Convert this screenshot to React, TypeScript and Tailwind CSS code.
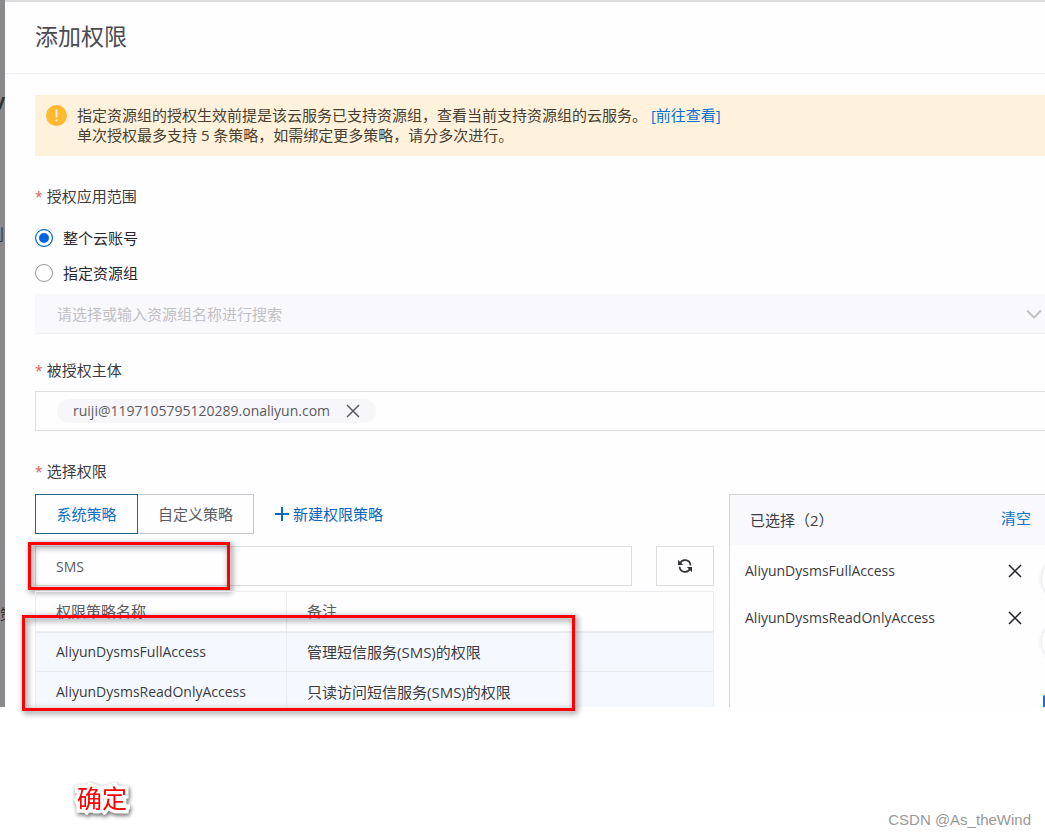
import { useState } from "react";

const policies = [
  { name: "AliyunDysmsFullAccess", note: "管理短信服务(SMS)的权限" },
  { name: "AliyunDysmsReadOnlyAccess", note: "只读访问短信服务(SMS)的权限" },
];

const CloseIcon = ({ className }: { className: string }) => (
  <svg viewBox="0 0 14 14" className={className} fill="none" stroke="currentColor" strokeWidth="1.5">
    <path d="M1 1l12 12M13 1L1 13" />
  </svg>
);

const Required = () => <span className="mr-1 text-sm leading-none text-[#dd6055]">*</span>;

const App = () => {
  const [scope, setScope] = useState("account");
  const [keyword, setKeyword] = useState("SMS");

  return (
    <div className="min-h-screen bg-white font-['Open_Sans','Noto_Sans_CJK_SC',sans-serif] text-[15px] leading-5 text-[#3c3c40]">
      <div className="flex">
        {/* page dimmed behind the drawer */}
        <aside className="relative w-[5px] shrink-0 overflow-hidden bg-[#8b898e] text-[#333]">
          <span className="absolute top-[86px] -left-[5px] text-lg font-bold">y</span>
          <span className="absolute top-[224px] -left-[11px]">则</span>
          <span className="absolute top-[604px] left-0">策</span>
        </aside>

        <main className="relative min-w-0 flex-1 bg-[#fefdff]">
          <header className="flex h-[74px] items-center border-t-2 border-b border-t-[#dddce0] border-b-[#f0eff3] px-[30px] pb-1">
            <h1 className="text-[23px] text-[#4c4c50]">添加权限</h1>
          </header>

          <form className="pt-[21px] pl-[30px]" onSubmit={(e) => e.preventDefault()}>
            <div className="flex gap-2.5 bg-[#fff2dd] px-[11px] pt-2.5 pb-[11px] text-[#4a3e30]">
              <svg viewBox="0 0 21 21" className="size-[21px] shrink-0">
                <circle cx="10.5" cy="10.5" r="10.5" fill="#ffba32" />
                <path d="M10.5 4.5v8M10.5 14.5v2" stroke="#fff2dd" strokeWidth="1.8" />
              </svg>
              <div>
                <p>
                  指定资源组的授权生效前提是该云服务已支持资源组，查看当前支持资源组的云服务。
                  <a href="#" className="text-[#0a72cc]"> [前往查看]</a>
                </p>
                <p>单次授权最多支持 5 条策略，如需绑定更多策略，请分多次进行。</p>
              </div>
            </div>

            <fieldset>
              <legend className="pt-[30px] pb-[22px]"><Required />授权应用范围</legend>
              <div className="flex flex-col gap-[15px] text-[#28282c]">
                <label className="flex items-center gap-2.5">
                  <input
                    type="radio"
                    name="scope"
                    checked={scope === "account"}
                    onChange={() => setScope("account")}
                    className="size-[18px] appearance-none rounded-full border border-[#999] checked:border-[#0064c8] checked:bg-[#0064e0] checked:shadow-[inset_0_0_0_3px_white]"
                  />
                  整个云账号
                </label>
                <label className="flex items-center gap-2.5">
                  <input
                    type="radio"
                    name="scope"
                    checked={scope === "group"}
                    onChange={() => setScope("group")}
                    className="size-[18px] appearance-none rounded-full border border-[#999] checked:border-[#0064c8] checked:bg-[#0064e0] checked:shadow-[inset_0_0_0_3px_white]"
                  />
                  指定资源组
                </label>
              </div>
            </fieldset>

            <div className="relative mt-[11px]">
              <select
                disabled
                aria-label="资源组"
                className="block h-10 w-full appearance-none border-b border-[#f0eff3] bg-[#f9f8fc] px-[22px] text-[#c1c0c6] opacity-100"
              >
                <option>请选择或输入资源组名称进行搜索</option>
              </select>
              <svg viewBox="0 0 16 10" className="absolute top-[15px] right-[3px] h-2.5 w-4" fill="none" stroke="#c1c0c4" strokeWidth="2">
                <path d="M1 1.5l7 7 7-7" />
              </svg>
            </div>

            <div className="pt-[26px] pb-[11px]"><Required />被授权主体</div>
            <div className="flex h-10 items-center border border-r-0 border-[#dedde2] px-[21px]">
              <span className="flex h-6 items-center gap-4 rounded-full bg-[#f7f6fa] px-4 text-sm text-[#5c5c60]">
                ruiji@1197105795120289.onaliyun.com
                <button type="button" aria-label="移除">
                  <CloseIcon className="size-3.5" />
                </button>
              </span>
            </div>

            <div className="pt-[30px] pb-[13px]"><Required />选择权限</div>
            <div className="flex gap-[15px]">
              <div className="min-w-0 flex-1">
                <div className="flex h-10 items-stretch">
                  <button type="button" className="w-[103px] border border-[#256483] text-[#0a72cc]">系统策略</button>
                  <button type="button" className="w-[116px] border border-l-0 border-[#c8c7cc] text-[#5c5c60]">自定义策略</button>
                  <a href="#" className="ml-[21px] flex items-center gap-1 text-[#0a66bb]">
                    <svg viewBox="0 0 14 14" className="size-3.5" stroke="currentColor" strokeWidth="2">
                      <path d="M7 0v14M0 7h14" />
                    </svg>
                    新建权限策略
                  </a>
                </div>

                <div className="relative mt-3 flex gap-6">
                  <input
                    type="text"
                    aria-label="搜索策略"
                    value={keyword}
                    onChange={(e) => setKeyword(e.target.value)}
                    className="h-10 min-w-0 flex-1 border border-[#dedde2] px-5 text-sm text-[#5c5c60]"
                  />
                  <button type="button" aria-label="刷新" className="flex w-[58px] items-center justify-center border border-[#dedde2]">
                    <svg viewBox="0 0 14 14" className="size-3.5" fill="none" stroke="#333" strokeWidth="1.7">
                      <path d="M2 4.5a5.4 5.4 0 0 1 10.4 1.7M12 9.5A5.4 5.4 0 0 1 1.6 7.8" />
                      <path d="M0 .8v5.1h5.1zM14 13.2V8.1H8.9z" fill="#333" stroke="none" />
                    </svg>
                  </button>
                  <div className="pointer-events-none absolute -top-1 -left-[7px] h-12 w-[202px] border-3 border-[#ff0000] drop-shadow-[2px_2px_3px_rgba(0,0,0,0.6)]" />
                </div>

                <div className="relative mt-[5px]">
                  <div className="h-[116px] overflow-hidden">
                    <table className="w-full table-fixed border border-[#ecebf0] text-left">
                      <thead>
                        <tr className="h-10 border-b-2 border-[#ecebf0] text-[#5c5c60]">
                          <th className="w-[251px] border-r border-[#ecebf0] pl-5 font-normal">权限策略名称</th>
                          <th className="pl-5 font-normal">备注</th>
                        </tr>
                      </thead>
                      <tbody>
                        {policies.map((policy) => (
                          <tr key={policy.name} className="h-10 border-b border-[#ecebf0] bg-[#f5f8ff]">
                            <td className="border-r border-[#ecebf0] pl-5 text-sm">{policy.name}</td>
                            <td className="pl-5">{policy.note}</td>
                          </tr>
                        ))}
                      </tbody>
                    </table>
                  </div>
                  <div className="pointer-events-none absolute top-6 -left-[13px] h-24 w-[553px] border-3 border-[#ff0000] drop-shadow-[2px_2px_3px_rgba(0,0,0,0.6)]" />
                </div>
              </div>

              <section className="w-[316px] shrink-0 border-t border-l border-[#d4d3d8]">
                <div className="flex h-[50px] items-center justify-between bg-[#f9f8fc] pr-3.5 pl-5">
                  <h2>已选择（2）</h2>
                  <button type="button" className="pb-1 text-[#0a72cc]">清空</button>
                </div>
                <ul className="flex flex-col gap-[27px] pt-4 pr-[23px] pl-[15px] text-sm">
                  {policies.map((policy) => (
                    <li key={policy.name} className="flex items-center justify-between">
                      {policy.name}
                      <button type="button" aria-label="移除" className="text-[#222]">
                        <CloseIcon className="size-3.5" />
                      </button>
                    </li>
                  ))}
                </ul>
              </section>
            </div>
          </form>

          {/* edge of the floating help buttons */}
          <div className="pointer-events-none absolute right-0 bottom-0 h-44 w-2 overflow-hidden">
            <span className="absolute top-7 left-[5px] size-10 rounded-full bg-white shadow-[0_0_5px_rgba(0,0,0,0.15)]" />
            <span className="absolute top-[91px] left-[5px] size-10 rounded-full bg-white shadow-[0_0_5px_rgba(0,0,0,0.15)]" />
            <span className="absolute right-0 bottom-0 h-3 w-0.5 rounded-tl-sm bg-[#0a72e8]" />
          </div>
        </main>
      </div>

      <footer className="flex items-start justify-between pt-[75px] pr-3.5 pl-[77px]">
        <strong className="text-[25px] leading-8 font-normal text-[#ff0000] drop-shadow-[1px_2px_2px_rgba(0,0,0,0.6)] [-webkit-text-stroke:7px_white] [paint-order:stroke_fill]">
          确定
        </strong>
        <span className="mt-7 font-['Liberation_Sans',sans-serif] text-[15px] leading-5 text-[#999]">CSDN @As_theWind</span>
      </footer>
    </div>
  );
};

export default App;
